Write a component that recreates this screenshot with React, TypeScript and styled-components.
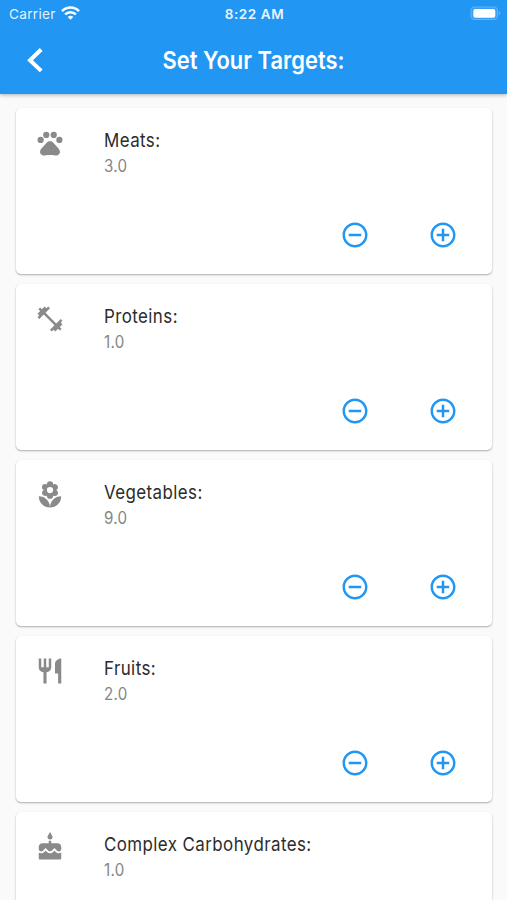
import React from 'react';
import styled, { createGlobalStyle } from 'styled-components';
import { MdPets, MdFitnessCenter, MdLocalFlorist, MdRestaurant, MdCake, MdAddCircleOutline, MdRemoveCircleOutline } from 'react-icons/md';
import type { IconType } from 'react-icons';

const GlobalStyle = createGlobalStyle`
  * { box-sizing: border-box; }
  body { margin: 0; background: #fafafa; font-family: Inter, Roboto, sans-serif; overflow: hidden; }
  button { border: 0; padding: 0; background: none; font: inherit; color: inherit; }
`;

const Screen = styled.div`
  height: 900px;
  overflow: hidden;
  display: flex;
  flex-direction: column;
`;

const Header = styled.header`
  flex: none;
  height: 94px;
  color: #fff;
  background: #2196f3;
  box-shadow: 0 1px 4px rgba(0, 0, 0, 0.3);
`;

const StatusBar = styled.div`
  height: 27px;
  display: grid;
  grid-template-columns: 1fr auto 1fr;
  align-items: center;
  padding: 0 6px 0 9px;
`;

const Carrier = styled.div`
  display: flex;
  align-items: center;
  gap: 5px;
  font-size: 13.6px;
  letter-spacing: 0.3px;
  color: #e4f2fe;

  svg { margin-top: -2px; }
`;

const Clock = styled.div`
  font-size: 13.5px;
  font-weight: 600;
  letter-spacing: 0.6px;
  color: #e9f5fe;
  padding-right: 1px;
`;

const BatterySlot = styled.div`
  display: flex;
  justify-content: flex-end;
`;

const NavBar = styled.div`
  height: 66px;
  display: grid;
  grid-template-columns: 70px 1fr 70px;
  align-items: center;
`;

const BackButton = styled.button`
  display: flex;
  justify-content: center;
  align-items: center;
  height: 66px;
`;

const Title = styled.h1`
  margin: 0;
  text-align: center;
  font-size: 24.3px;
  line-height: 30px;
  font-weight: 600;
  letter-spacing: 0.05px;
  transform: scaleX(0.9);
`;

const List = styled.main`
  display: flex;
  flex-direction: column;
  gap: 10px;
  padding: 14px 15px 0 16px;
`;

const Card = styled.section`
  flex: none;
  height: 166px;
  display: flex;
  flex-direction: column;
  justify-content: space-between;
  padding: 20px 34px 24px 19px;
  background: #fff;
  border-radius: 5px;
  box-shadow: 0 1px 2px rgba(0, 0, 0, 0.32);
`;

const Summary = styled.div`
  display: grid;
  grid-template-columns: 69px 1fr;
  color: #8a8a8a;
`;

const Name = styled.div`
  font-size: 18.8px;
  line-height: 26px;
  letter-spacing: 0.47px;
  color: #2c2c2c;
  transform: scaleX(0.9);
  transform-origin: left;
`;

const Amount = styled.div`
  font-size: 16.8px;
  line-height: 25px;
  letter-spacing: 0.3px;
  color: #858585;
  transform: scaleX(0.9);
  transform-origin: left;
`;

const Actions = styled.div`
  display: flex;
  justify-content: flex-end;
  gap: 58px;
  color: #2196f3;
`;

const StepButton = styled.button`
  display: flex;
`;

function WifiGlyph() {
  return (
    <svg width="19" height="14" viewBox="0 0 19 14" fill="none" stroke="#fff" strokeWidth="2.5">
      <path d="M1 5.1C5.8.3 13.2.3 18 5.1" />
      <path d="M4.1 8.3c3.1-2.9 7.7-2.9 10.8 0" />
      <path d="M9.5 13.7 6.7 10.9c1.6-1.4 4-1.4 5.6 0z" fill="#fff" stroke="none" />
    </svg>
  );
}

function BatteryGlyph() {
  return (
    <svg width="31" height="15" viewBox="0 0 31 15">
      <rect x="1" y="1" width="26.5" height="12.5" rx="3.6" fill="#379ff5" stroke="#62b4f7" strokeWidth="1.1" />
      <rect x="3.3" y="3" width="22" height="8.7" rx="2" fill="#fff" />
      <path d="M28.8 5v4.5q1.5-.6 1.5-2.2T28.8 5z" fill="#62b4f7" />
    </svg>
  );
}

function BackGlyph() {
  return (
    <svg width="18" height="26" viewBox="0 0 18 26" fill="none" stroke="#fff" strokeWidth="4">
      <path d="M15.2 2.5 4 13.2l11.2 10.7" />
    </svg>
  );
}

interface Target {
  name: string;
  amount: number;
  icon: IconType;
}

const targets: Target[] = [
  { name: 'Meats', amount: 3, icon: MdPets },
  { name: 'Proteins', amount: 1, icon: MdFitnessCenter },
  { name: 'Vegetables', amount: 9, icon: MdLocalFlorist },
  { name: 'Fruits', amount: 2, icon: MdRestaurant },
  { name: 'Complex Carbohydrates', amount: 1, icon: MdCake },
];

function TargetCard({ name, amount, icon: Icon }: Target) {
  return (
    <Card>
      <Summary>
        <Icon size={30} />
        <div>
          <Name>{name}:</Name>
          <Amount>{amount.toFixed(1)}</Amount>
        </div>
      </Summary>
      <Actions>
        <StepButton aria-label={`Decrease ${name}`}><MdRemoveCircleOutline size={30} /></StepButton>
        <StepButton aria-label={`Increase ${name}`}><MdAddCircleOutline size={30} /></StepButton>
      </Actions>
    </Card>
  );
}

export default function App() {
  return (
    <Screen>
      <GlobalStyle />
      <Header>
        <StatusBar>
          <Carrier>Carrier <WifiGlyph /></Carrier>
          <Clock>8:22 AM</Clock>
          <BatterySlot><BatteryGlyph /></BatterySlot>
        </StatusBar>
        <NavBar>
          <BackButton aria-label="Back"><BackGlyph /></BackButton>
          <Title>Set Your Targets:</Title>
        </NavBar>
      </Header>
      <List>
        {targets.map((target) => <TargetCard key={target.name} {...target} />)}
      </List>
    </Screen>
  );
}
